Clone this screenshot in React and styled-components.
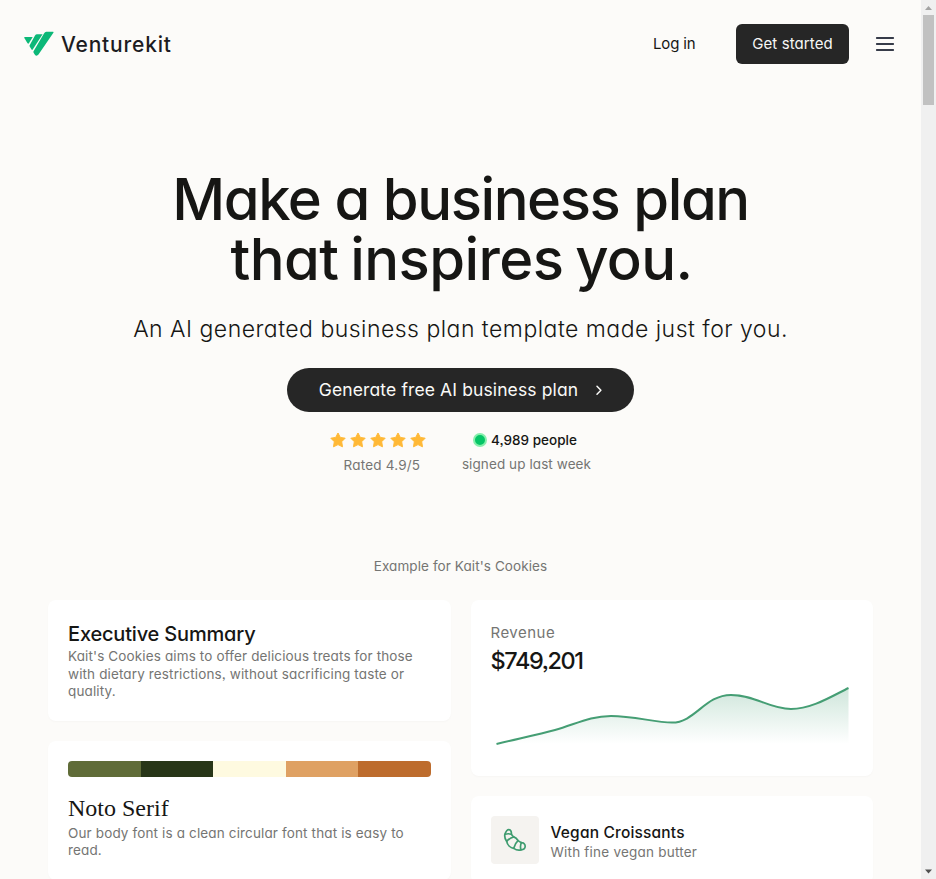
import React from "react";
import styled, { createGlobalStyle } from "styled-components";

const Global = createGlobalStyle`
  * { box-sizing: border-box; }
  body {
    margin: 0;
    overflow: hidden;
    background: #fcfbf9;
    color: #161614;
    font-family: Inter, "Liberation Sans", sans-serif;
    font-feature-settings: "cv11", "ss03";
  }
  svg { display: block; flex: none; }
  h1, h2, p { margin: 0; }
`;

const Window = styled.div`
  display: flex;
  height: 100vh;
  overflow: hidden;
`;

const Page = styled.div`
  flex: 1;
  min-width: 0;
  overflow: hidden;
`;

const Header = styled.header`
  display: flex;
  align-items: center;
  justify-content: space-between;
  height: 88px;
  padding: 0 24px;
`;

const Brand = styled.a`
  display: flex;
  align-items: center;
  gap: 6px;
  font-size: 21px;
  line-height: 26px;
  font-weight: 500;
  letter-spacing: 0.8px;
  color: #1c1c22;
`;

const BrandName = styled.span`
  padding-top: 2px;
`;

const Nav = styled.nav`
  display: flex;
  align-items: center;
`;

const LoginLink = styled.a`
  margin-right: 40.5px;
  padding-bottom: 1px;
  font-size: 15px;
  letter-spacing: -0.15px;
`;

const StartButton = styled.button`
  width: 113px;
  height: 40px;
  margin-right: 24px;
  padding: 0 0 2px;
  border: 0;
  border-radius: 6px;
  background: #262626;
  color: #f7f7f5;
  font: inherit;
  font-size: 15px;
  letter-spacing: 0.1px;
  font-feature-settings: inherit;
`;

const Hero = styled.section`
  display: flex;
  flex-direction: column;
  align-items: center;
  padding-top: 81px;
`;

const Headline = styled.h1`
  font-size: 58px;
  line-height: 60px;
  font-weight: 500;
  letter-spacing: -1.45px;
  white-space: nowrap;
  text-align: center;
`;

const HeadlineEnd = styled.span`
  padding-left: 2px;
  letter-spacing: -0.6px;
  word-spacing: -3px;
`;

const Tagline = styled.p`
  margin-top: 24px;
  font-size: 23px;
  line-height: 32px;
  font-weight: 300;
  letter-spacing: 0.48px;
  white-space: nowrap;
`;

const Cta = styled.button`
  display: flex;
  align-items: center;
  justify-content: center;
  gap: 12px;
  width: 347px;
  height: 44px;
  margin-top: 23px;
  padding: 0 0 2px 4px;
  border: 0;
  border-radius: 22px;
  background: #262626;
  color: #f9f9f7;
  font: inherit;
  font-size: 17.5px;
  letter-spacing: 0.12px;
  font-feature-settings: inherit;
`;

const Proof = styled.div`
  display: flex;
  gap: 36px;
  margin-top: 16px;
`;

const ProofColumn = styled.div`
  display: flex;
  flex-direction: column;
  align-items: center;
`;

const ProofTop = styled.div`
  display: flex;
  align-items: center;
  gap: 4px;
  height: 24px;
  padding-right: ${(p) => p.$inset || 0}px;
  font-size: 13.5px;
  font-weight: 500;
  letter-spacing: 0.02px;
`;

const LiveDot = styled.span`
  width: 14px;
  height: 14px;
  border: 2.5px solid #86efac;
  border-radius: 50%;
  background: #05c566;
`;

const Muted = styled.p`
  padding-left: ${(p) => p.$indent || 0}px;
  font-size: 13.5px;
  line-height: ${(p) => p.$line || 17.5}px;
  letter-spacing: ${(p) => p.$tracking || 0}px;
  color: #757573;
`;

const ExampleLabel = styled(Muted)`
  margin: 79px 0 24.5px;
  text-align: center;
`;

const Board = styled.div`
  display: grid;
  grid-template-columns: 1fr 1fr;
  gap: 20px;
  padding: 0 48px;
`;

const Column = styled.div`
  display: flex;
  flex-direction: column;
  gap: 20px;
`;

const Card = styled.section`
  padding: 20px 20px ${(p) => p.$bottom || 20}px;
  border-radius: 8px;
  background: #fff;
  box-shadow: 0 1px 2px rgba(40, 30, 10, 0.025);
`;

const CardTitle = styled.h2`
  font-size: ${(p) => p.$size}px;
  line-height: ${(p) => p.$line}px;
  font-weight: 500;
  letter-spacing: ${(p) => p.$tracking || 0}px;
`;

const SerifTitle = styled.h2`
  margin-top: 16px;
  font: 400 24px/31.5px "Liberation Serif", serif;
`;

const Palette = styled.div`
  display: flex;
  height: 16px;
  border-radius: 4px;
  overflow: hidden;
`;

const Swatch = styled.span`
  flex: 1;
  background: ${(p) => p.$color};
`;

const MetricLabel = styled.p`
  padding-top: 1px;
  font-size: 15px;
  line-height: 24px;
  letter-spacing: 0.48px;
  color: #757573;
`;

const Product = styled.div`
  display: flex;
  align-items: center;
  gap: 12px;
`;

const ProductText = styled.div`
  padding-top: 4px;
`;

const ProductIcon = styled.div`
  display: grid;
  place-items: center;
  width: 48px;
  height: 48px;
  border-radius: 4px;
  background: #f5f3f0;
`;

const ScrollTrack = styled.div`
  display: flex;
  flex-direction: column;
  align-items: center;
  width: 15px;
  background: #f0f0f0;
`;

const ScrollThumb = styled.div`
  width: 11px;
  height: 90px;
  margin-bottom: auto;
  background: #c1c1c1;
`;

function Logo() {
  return (
    <svg width="31" height="26" viewBox="0 0 31 26" fill="#0cb878">
      <path d="M.9 6H8.7L4.9 12.2Q4.2 13.2 3.4 12.1L.3 7.1Q-.1 6.2.9 6Z" />
      <path d="M13 3.2H18.6L8.7 18.6Q8.1 19.4 7.5 18.6L5.7 15.6Q5.2 14.8 5.8 13.9L11 4.6Q11.8 3.2 13 3.2Z" />
      <path d="M22.3 .8H29Q30 .8 29.4 1.7L14.5 23.6Q12.5 25.8 10.7 23.5L9.5 21.6Q9.1 20.8 9.7 19.9L20 2.6Q20.9 .8 22.3 .8Z" />
    </svg>
  );
}

function MenuIcon() {
  return (
    <svg width="24" height="24" viewBox="0 0 24 24" stroke="#363b49" strokeWidth="1.8" strokeLinecap="round">
      <path d="M3.8 6H20.2M3.8 12H20.2M3.8 18H20.2" />
    </svg>
  );
}

function Chevron() {
  return (
    <svg width="16" height="16" viewBox="0 0 16 16" fill="none" stroke="#f9f9f7" strokeWidth="1.5" strokeLinecap="round" strokeLinejoin="round">
      <path d="M7 5.3L10.9 9.3L7 13.3" />
    </svg>
  );
}

function Star() {
  return (
    <svg width="16" height="16" viewBox="0 0 16 16" fill="#ffb937" stroke="#ffb937" strokeLinejoin="round">
      <path d="M8 1L10.3 5.4L15.2 6.2L11.7 9.7L12.5 14.8L8 12.6L3.5 14.8L4.3 9.7L.8 6.2L5.7 5.4Z" />
    </svg>
  );
}

function Croissant() {
  return (
    <svg width="24" height="24" viewBox="0 0 24 24" fill="none" stroke="#3f9c70" strokeWidth="1.7" strokeLinecap="round" strokeLinejoin="round">
      <path d="M1.8 6.6C2.8 3.5 4 1.5 5.9 1.6C8 1.7 8.5 4 8.4 6.1C8.8 7.5 9.6 8.2 10.8 8.9C12.6 9.5 14 10.8 15 12.5C16.1 13.7 17.3 14.2 18.5 14.6C20.4 14.5 22.2 16 22.2 18.2C22.1 20.6 20.1 21.7 18 21.9C15.5 22.5 12.7 21.8 10.7 20.4C7.2 19.9 4.3 16.9 3.7 13.4C2 11.3 1.5 9 1.8 6.6Z" />
      <path d="M2.1 6.3C4.2 5.6 6.3 5.6 8.3 6.3M3.8 13.2C5.5 11.4 7.8 9.8 10.7 9M10.7 20.2C11.4 17.6 12.6 14.9 15 12.7M18 21.7C17.2 19.3 17.3 17 18.4 14.7" />
    </svg>
  );
}

function RevenueChart() {
  const line =
    "M5.5 67C26 62 47 57.5 64 53C84 47.5 99 38.9 120 38.9C143 38.9 164 45.6 181 45.6C204 45.6 214 17.9 240 17.9C264 17.9 278 32 300 32C321 32 342 18.5 357.5 11";
  return (
    <svg width="362" height="79" viewBox="0 0 362 79">
      <defs>
        <linearGradient id="revenue-fill" x1="0" y1="11" x2="0" y2="67" gradientUnits="userSpaceOnUse">
          <stop stopColor="#3f9c70" stopOpacity=".25" />
          <stop offset="1" stopColor="#3f9c70" stopOpacity="0" />
        </linearGradient>
      </defs>
      <path d={`${line}V67H6Z`} fill="url(#revenue-fill)" />
      <path d={line} fill="none" stroke="#459e74" strokeWidth="2" />
    </svg>
  );
}

function ScrollArrow({ down }) {
  return (
    <svg width="15" height="15" viewBox="0 0 15 15" fill={down ? "#505050" : "#a3a3a3"}>
      <path d={down ? "M4 5.5H11L7.5 9.5Z" : "M4 10H11L7.5 6Z"} />
    </svg>
  );
}

const palette = ["#606c38", "#283618", "#fefae0", "#dfa163", "#bd6c2d"];

export default function App() {
  return (
    <Window>
      <Global />
      <Page>
        <Header>
          <Brand>
            <Logo />
            <BrandName>Venturekit</BrandName>
          </Brand>
          <Nav>
            <LoginLink>Log in</LoginLink>
            <StartButton>Get started</StartButton>
            <MenuIcon />
          </Nav>
        </Header>
        <Hero>
          <Headline>
            Make a business plan
            <br />
            <HeadlineEnd>that inspires you.</HeadlineEnd>
          </Headline>
          <Tagline>An AI generated business plan template made just for you.</Tagline>
          <Cta>
            Generate free AI business plan
            <Chevron />
          </Cta>
          <Proof>
            <ProofColumn>
              <ProofTop>
                {[1, 2, 3, 4, 5].map((n) => <Star key={n} />)}
              </ProofTop>
              <Muted $line={27} $indent={8} $tracking={0.2}>Rated 4.9/5</Muted>
            </ProofColumn>
            <ProofColumn>
              <ProofTop $inset={3}>
                <LiveDot />
                4,989 people
              </ProofTop>
              <Muted $line={24} $tracking={0.09}>signed up last week</Muted>
            </ProofColumn>
          </Proof>
        </Hero>
        <ExampleLabel $tracking={0.09}>Example for Kait's Cookies</ExampleLabel>
        <Board>
          <Column>
            <Card $bottom={20.5}>
              <CardTitle $size={20} $line={28} $tracking={-0.18}>Executive Summary</CardTitle>
              <Muted $tracking={0.13}>
                Kait's Cookies aims to offer delicious treats for those with dietary restrictions, without sacrificing taste or quality.
              </Muted>
            </Card>
            <Card>
              <Palette>
                {palette.map((color) => <Swatch key={color} $color={color} />)}
              </Palette>
              <SerifTitle>Noto Serif</SerifTitle>
              <Muted $tracking={0.14}>Our body font is a clean circular font that is easy to read.</Muted>
            </Card>
          </Column>
          <Column>
            <Card>
              <MetricLabel>Revenue</MetricLabel>
              <CardTitle $size={23.5} $line={32} $tracking={-1.4}>$749,201</CardTitle>
              <RevenueChart />
            </Card>
            <Card>
              <Product>
                <ProductIcon>
                  <Croissant />
                </ProductIcon>
                <ProductText>
                  <CardTitle $size={15.5} $line={22} $tracking={0.18}>Vegan Croissants</CardTitle>
                  <Muted $tracking={0.22}>With fine vegan butter</Muted>
                </ProductText>
              </Product>
            </Card>
          </Column>
        </Board>
      </Page>
      <ScrollTrack>
        <ScrollArrow />
        <ScrollThumb />
        <ScrollArrow down />
      </ScrollTrack>
    </Window>
  );
}
